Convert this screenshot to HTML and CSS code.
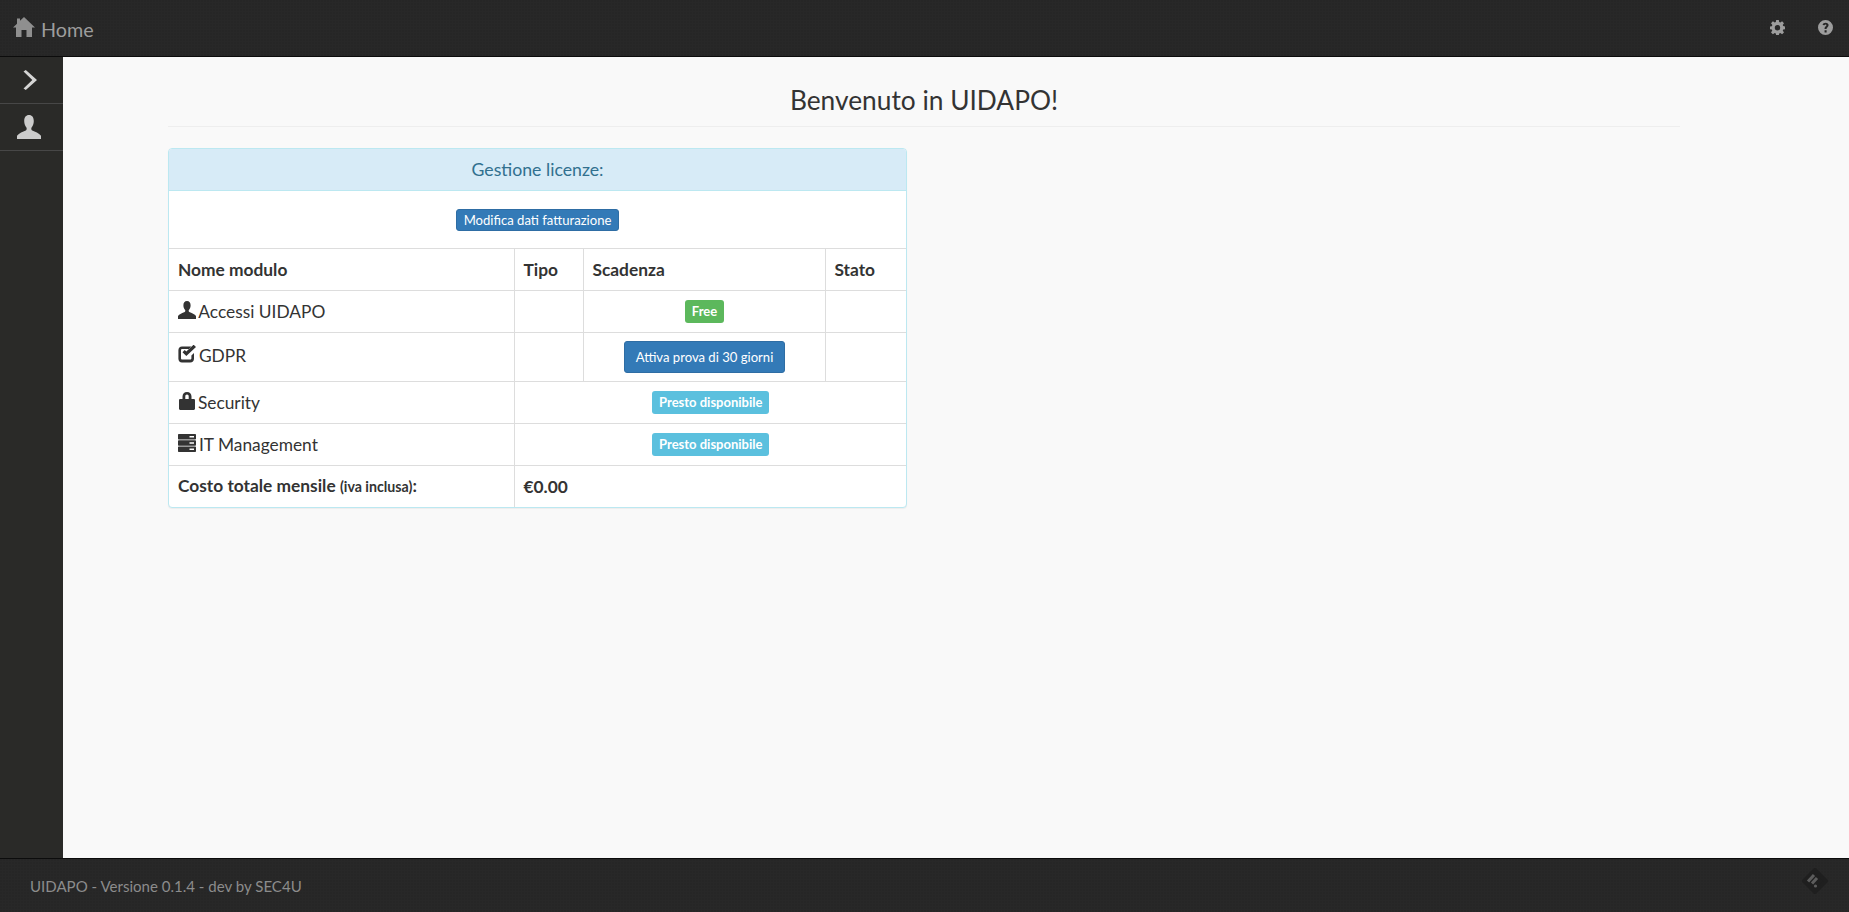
FILE: index.html
```html
<!DOCTYPE html>
<html lang="it">
<head>
<meta charset="utf-8">
<title>UIDAPO</title>
<link rel="stylesheet" href="styles.css">
</head>
<body>
<header class="navbar">
  <a class="brand">
    <svg class="brand-icon" viewBox="0 0 22 20"><path d="M11 0 22 10.500h-3V20h-5.500v-7h-5v7H3v-9.500H0L4 6.700V1.500h3v2.300z"/></svg>
    <span>Home</span>
  </a>
  <div class="nav-tools">
    <svg class="tool" viewBox="0 0 16 16"><path fill-rule="evenodd" d="M6.600 0h2.800l.4 2.200 1.200.5L12.900 1.400l2 2-1.300 1.900.5 1.200 2.200.4v2.800l-2.200.4-.5 1.200 1.300 1.900-2 2-1.900-1.300-1.200.5-.4 2.200H6.600l-.4-2.200-1.200-.5-1.900 1.300-2-2 1.300-1.900-.5-1.200L-.2 9.800V7l2.200-.4.5-1.300L1.100 3.400l2-2 1.900 1.300 1.200-.5zM8 5.400a2.900 2.900 0 1 0 0 5.800 2.900 2.900 0 0 0 0-5.800z"/></svg>
    <svg class="tool" viewBox="0 0 16 16"><path fill-rule="evenodd" d="M8 0a8 8 0 1 1 0 16A8 8 0 0 1 8 0zM7 11v2.300h2.200V11zM8.200 2.800c-1.700 0-3 .7-3.300 2.500l2.100.4c.1-.7.500-1 1.100-1 .5 0 .9.300.9.800 0 1-2 1.300-2 3.600v.400h2.100c0-1.700 2.200-1.900 2.200-4.200 0-1.500-1.300-2.500-3.100-2.500z"/></svg>
  </div>
</header>
<div class="shell">
  <nav class="sidebar">
    <a class="side-item side-item-chevron">
      <svg class="side-chevron" viewBox="0 0 14 20"><path d="M2.800 0 14 10 2.800 20 0.500 18.600 9.300 10 .5 1.500z"/></svg>
    </a>
    <a class="side-item side-item-user">
      <svg class="side-user" viewBox="0 0 24 24"><path d="M12 0c3 0 4.800 2.300 4.800 6 0 2.800-1 5-2.200 6.400-.5.600-.4 2.600.6 3.100 3 1.300 6.600 2.600 8.800 5.200V24H0v-3.300c2.200-2.600 5.800-3.900 8.800-5.200 1-.5 1.100-2.500.6-3.100C8.200 11 7.200 8.800 7.200 6c0-3.700 1.800-6 4.800-6z"/></svg>
    </a>
  </nav>
  <main class="content">
    <div class="container">
      <h1 class="page-title">Benvenuto in UIDAPO!</h1>
      <section class="panel">
        <div class="panel-heading">Gestione licenze:</div>
        <div class="panel-body"><a class="btn btn-xs">Modifica dati fatturazione</a></div>
        <table class="licenses">
          <colgroup>
            <col class="col-name"><col class="col-type"><col class="col-exp"><col class="col-state">
          </colgroup>
          <thead>
            <tr class="row-42"><th>Nome modulo</th><th>Tipo</th><th>Scadenza</th><th>Stato</th></tr>
          </thead>
          <tbody>
            <tr class="row-42">
              <td><svg class="mod-icon" viewBox="0 0 18 18"><path d="M9 0c2.400 0 3.600 1.800 3.600 4.300 0 2-.7 3.600-1.700 4.600-.4.400-.3 1.700.4 2 2.200 1 5.700 2.200 6.700 4V18H0v-3.100c1-1.800 4.500-3 6.700-4 .7-.3.800-1.600.4-2C6.100 7.900 5.400 6.300 5.400 4.300 5.400 1.800 6.600 0 9 0z"/></svg> Accessi UIDAPO</td>
              <td></td>
              <td class="center"><span class="label label-success">Free</span></td>
              <td></td>
            </tr>
            <tr class="row-49">
              <td class="top-cell"><svg class="mod-icon" viewBox="0 0 18 18"><path d="M4 1.500h9.500l-2.600 2.600H4.300c-.8 0-1.300.5-1.300 1.300v7.800c0 .8.500 1.300 1.300 1.300h7.800c.8 0 1.300-.5 1.300-1.300v-2.700L16 8v5.700c0 2.100-1.500 3.800-3.800 3.800H4C1.800 17.500.4 16 .4 13.700V5.300C.4 3 1.800 1.500 4 1.500z"/><path d="M4.500 7.200 8.300 11 18 1.900 15.600-.3 8.300 6.500 6.700 4.900z"/></svg> GDPR</td>
              <td></td>
              <td class="center"><a class="btn btn-sm">Attiva prova di 30 giorni</a></td>
              <td></td>
            </tr>
            <tr class="row-42">
              <td><svg class="mod-icon mod-icon-lock" viewBox="0 0 18 18"><path fill-rule="evenodd" d="M9 0c2.800 0 4.500 1.800 4.500 4.500V7h2.300c.6 0 1.200.5 1.200 1.200v8.600c0 .7-.6 1.200-1.200 1.200H2.200C1.600 18 1 17.500 1 16.800V8.200C1 7.500 1.600 7 2.200 7h2.300V4.500C4.500 1.800 6.200 0 9 0zm0 2.600C8 2.600 7.300 3.300 7.300 4.500V7h3.400V4.500c0-1.200-.7-1.900-1.700-1.900z"/></svg> Security</td>
              <td colspan="3" class="center"><span class="label label-info">Presto disponibile</span></td>
            </tr>
            <tr class="row-42">
              <td><svg class="mod-icon" viewBox="0 0 18 18"><path fill-rule="evenodd" d="M1 0h16c.6 0 1 .4 1 1v3.600c0 .6-.4 1-1 1H1c-.6 0-1-.4-1-1V1c0-.6.4-1 1-1zm10.500 2v1.500h4.500V2zM1 6.300h16c.6 0 1 .4 1 1v3.400c0 .6-.4 1-1 1H1c-.6 0-1-.4-1-1V7.300c0-.6.4-1 1-1zm10.500 2v1.400h4.500V8.300zM1 12.400h16c.6 0 1 .4 1 1V17c0 .6-.4 1-1 1H1c-.6 0-1-.4-1-1v-3.600c0-.6.4-1 1-1zm10.500 2v1.500h4.500v-1.500z"/></svg> IT Management</td>
              <td colspan="3" class="center"><span class="label label-info">Presto disponibile</span></td>
            </tr>
            <tr class="row-41">
              <td><strong>Costo totale mensile <small>(iva inclusa)</small>:</strong></td>
              <td colspan="3"><strong>€0.00</strong></td>
            </tr>
          </tbody>
        </table>
      </section>
    </div>
  </main>
</div>
<footer class="footer">
  <span class="footer-text">UIDAPO - Versione 0.1.4 - dev by SEC4U</span>
  <svg class="feedly" viewBox="0 0 26 26"><path class="feedly-bg" d="M13 2 24 13 13 24 2 13z"/><path class="feedly-mark" d="M6 13.500 12 7M10 15.500 15 10"/><circle class="feedly-dot" cx="13.500" cy="18" r="1.600"/></svg>
</footer>
</body>
</html>
```
FILE: styles.css
```css
* { box-sizing: border-box; }
html, body { height: 100%; margin: 0; }
body {
  display: flex;
  flex-direction: column;
  font-family: "Lato", "Liberation Sans", sans-serif;
  font-size: 17.33px;
  line-height: 1.43;
  color: #333;
  background: #f9f9f9;
  overflow: hidden;
}
.navbar {
  flex: 0 0 57px;
  display: flex;
  align-items: center;
  justify-content: space-between;
  padding: 0 0 0 13px;
  background-color: #282828;
  background-image: radial-gradient(circle at 1px 1px, #262626 1px, transparent 1px);
  background-size: 3px 3px;
  border-bottom: 1px solid #0c0c0c;
}
.brand {
  display: flex;
  align-items: center;
  gap: 6px;
  font-size: 19.8px;
  color: #9d9d9d;
  padding-top: 2px;
}
.brand-icon { width: 22px; height: 20px; fill: #8f8f8f; margin-top: -3px; }
.nav-tools { display: flex; align-items: center; gap: 33px; padding-right: 16px; margin-top: -2px; }
.tool { width: 15px; height: 15px; fill: #9d9d9d; }
.shell { flex: 1; display: flex; min-height: 0; }
.sidebar { flex: 0 0 63px; background: #2a2a28; }
.side-item {
  display: flex;
  align-items: center;
  justify-content: center;
  height: 47px;
  border-bottom: 1px solid #474747;
}
.side-item-chevron { padding-right: 3px; }
.side-item-user { padding-right: 5px; }
.side-chevron { width: 14px; height: 20px; fill: #d5d5d5; }
.side-user { width: 24px; height: 24px; fill: #cccccc; }
.content { flex: 1; background: #f9f9f9; }
.container { width: 1512px; margin-left: 105px; }
.page-title {
  margin: 0 0 21px;
  height: 70px;
  padding-top: 27px;
  font-size: 26.3px;
  line-height: 32px;
  font-weight: 400;
  text-align: center;
  color: #333;
  border-bottom: 1px solid #eeeeee;
}
.panel {
  width: 739px;
  background: #fff;
  border: 1px solid #bce8f1;
  border-radius: 4px;
  box-shadow: 0 1px 1px rgba(0, 0, 0, .05);
  overflow: hidden;
}
.panel-heading {
  height: 42px;
  background: #d7ebf7;
  border-bottom: 1px solid #bce8f1;
  color: #31708f;
  font-size: 17.7px;
  line-height: 41px;
  text-align: center;
}
.panel-body { height: 57px; display: flex; align-items: center; justify-content: center; }
.btn {
  display: inline-block;
  color: #fff;
  background: #337ab7;
  border: 1px solid #2e6da4;
  border-radius: 3px;
  white-space: nowrap;
}
.btn-xs { padding: 0 7px; font-size: 13.1px; line-height: 20px; height: 22px; }
.btn-sm { padding: 5px 11px; font-size: 13.1px; line-height: 20px; height: 32px; }
.licenses { width: 737px; border-collapse: collapse; table-layout: fixed; }
.col-name { width: 345px; }
.col-type { width: 69px; }
.col-exp { width: 242px; }
.col-state { width: 81px; }
.licenses th, .licenses td {
  padding: 0 8px 0 9px;
  border: 1px solid #ddd;
  font-size: 17.33px;
  line-height: 25px;
  text-align: left;
  vertical-align: middle;
}
.licenses th:first-child, .licenses td:first-child { border-left: 0; }
.licenses th:last-child, .licenses td:last-child { border-right: 0; }
.licenses tbody tr:last-child td { border-bottom: 0; }
.licenses th { font-weight: 700; }
.licenses td.center { text-align: center; }
.licenses td.top-cell { vertical-align: top; padding-top: 10px; }
.row-42 { height: 42px; }
.row-41 { height: 41px; }
.row-49 { height: 49px; }
.mod-icon { width: 18px; height: 18px; fill: #333; vertical-align: -1px; margin-right: -1.5px; }
.mod-icon-lock { margin-right: -2.500px; }
.licenses small { font-size: 14.2px; }
.label {
  display: inline-block;
  margin: -2px 0 2px;
  padding: 0 7px;
  height: 23px;
  font-size: 13px;
  line-height: 22px;
  font-weight: 700;
  color: #fff;
  border-radius: 3px;
  vertical-align: middle;
}
.label-success { background: #5cb85c; }
.label-info { background: #5bc0de; }
.footer {
  flex: 0 0 54px;
  display: flex;
  align-items: center;
  justify-content: space-between;
  padding: 0 21px 0 30px;
  background-color: #282828;
  background-image: radial-gradient(circle at 1px 1px, #262626 1px, transparent 1px);
  background-size: 3px 3px;
  border-top: 1px solid #0c0c0c;
  font-size: 15.05px;
  color: #8c8c8c;
}
.footer-text { padding-top: 2px; }
.feedly { width: 26px; height: 26px; margin-bottom: 10px; }
.feedly-bg { fill: #1f1f1f; stroke: #1f1f1f; stroke-width: 4; stroke-linejoin: round; }
.feedly-mark { fill: none; stroke: #5c5c5c; stroke-width: 3; }
.feedly-dot { fill: #5c5c5c; }
```
